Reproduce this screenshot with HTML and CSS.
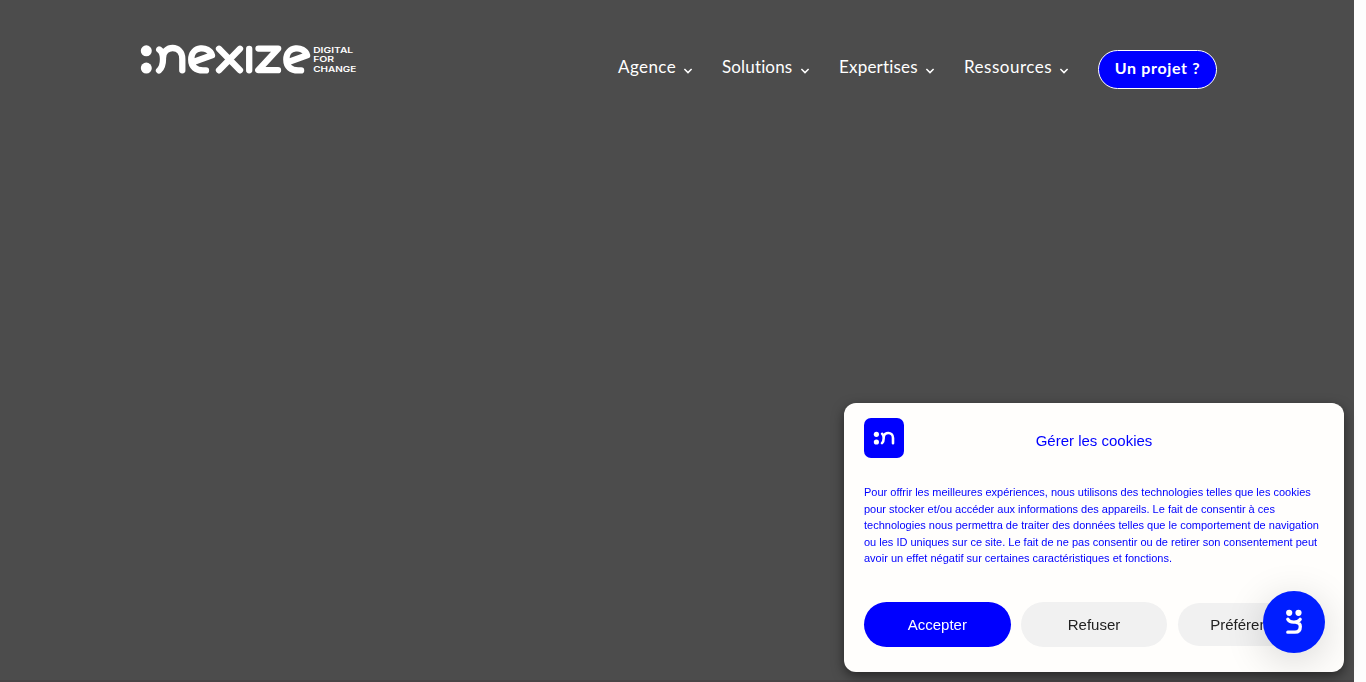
FILE: index.html
```html
<!DOCTYPE html>
<html lang="fr">
<head>
<meta charset="utf-8">
<title>Nexize</title>
<link rel="stylesheet" href="styles.css">
</head>
<body>
<div class="page">
  <header class="header">
    <a class="logo">
      <svg width="218" height="32" viewBox="140 44 218 32" fill="none" stroke="#fff" stroke-width="6.3" stroke-linecap="round" stroke-linejoin="round">
        <g fill="#fff" stroke="none"><circle cx="146.3" cy="50.8" r="5.5"/><circle cx="146.3" cy="68.1" r="5.5"/></g>
        <path d="M159.2 49.5Q163 52 163 59Q163 67 159 70.5M163 58C163 45 182.3 44 182.3 59V70.3"/>
        <path id="e" d="M194 61.8L212 55.3C209 45.3 191.2 45.5 191.2 59.5C191.2 67 196 70.4 203 70.4H206"/>
        <path d="M219 48.8L240 70.3M240 48.8L219 70.3M249.2 48.8V70.3M258.5 48.6H278.2L258.3 70.2H278"/>
        <use href="#e" x="95.1"/>
        <g class="tagline">
          <text x="313.2" y="53" textLength="40" lengthAdjust="spacingAndGlyphs">DIGITAL</text>
          <text x="313.2" y="62.3" textLength="21" lengthAdjust="spacingAndGlyphs">FOR</text>
          <text x="313.2" y="71.7" textLength="43" lengthAdjust="spacingAndGlyphs">CHANGE</text>
        </g>
      </svg>
    </a>
    <nav class="nav">
      <a class="link agence"><span>Agence</span><svg class="chevron" viewBox="0 0 8 6"><path d="M.4 1L4 4.6 7.6 1"/></svg></a>
      <a class="link solutions"><span>Solutions</span><svg class="chevron" viewBox="0 0 8 6"><path d="M.4 1L4 4.6 7.6 1"/></svg></a>
      <a class="link expertises"><span>Expertises</span><svg class="chevron" viewBox="0 0 8 6"><path d="M.4 1L4 4.6 7.6 1"/></svg></a>
      <a class="link ressources"><span>Ressources</span><svg class="chevron" viewBox="0 0 8 6"><path d="M.4 1L4 4.6 7.6 1"/></svg></a>
      <a class="project">Un projet ?</a>
    </nav>
  </header>
</div>
<section class="cookies">
  <div class="cookies-head">
    <svg class="mark" viewBox="0 0 40 40">
      <rect width="40" height="40" rx="7" fill="#00f"/>
      <circle cx="12.4" cy="16.3" r="2.6" fill="#fff"/><circle cx="12.4" cy="24" r="2.6" fill="#fff"/>
      <path d="M18.1 15.8Q19.7 17 19.7 20Q19.7 23.5 18 25.2M19.7 19.5C19.7 13.5 29 13.3 29 20V25.2" fill="none" stroke="#fff" stroke-width="2.6" stroke-linecap="round"/>
    </svg>
    <h2 class="title">Gérer les cookies</h2>
  </div>
  <p class="message">Pour offrir les meilleures expériences, nous utilisons des technologies telles que les cookies pour stocker et/ou accéder aux informations des appareils. Le fait de consentir à ces technologies nous permettra de traiter des données telles que le comportement de navigation ou les ID uniques sur ce site. Le fait de ne pas consentir ou de retirer son consentement peut avoir un effet négatif sur certaines caractéristiques et fonctions.</p>
  <div class="buttons">
    <button class="button accept">Accepter</button>
    <button class="button">Refuser</button>
    <button class="button prefs">Préférences</button>
  </div>
</section>
<div class="chat">
  <svg width="62" height="62" viewBox="0 0 62 62" fill="none" stroke="#fff" stroke-width="3.3" stroke-linecap="round" stroke-linejoin="round">
    <g fill="#fff" stroke="none"><circle cx="26.2" cy="21.8" r="3.1"/><circle cx="35.5" cy="21.8" r="3.1"/></g>
    <path d="M24.8 28.2C26.5 31.8 34.5 32.3 37.2 28.3M33 31.3Q37.3 31.8 37.3 35.5Q37.3 41.2 32 41.2H24.8"/>
  </svg>
</div>
</body>
</html>
```

FILE: styles.css
```css
* { box-sizing: border-box; }
body { margin: 0; height: 682px; overflow: hidden; background: #fdfdfd; font-family: "Liberation Sans", Arial, sans-serif; }
.page { width: 1354px; height: 682px; background: #4c4c4c; border-bottom: 2px solid #484446; }
.header { display: flex; justify-content: space-between; align-items: flex-start; padding: 44px 137px 0 140px; }
.logo { display: flex; }
.tagline { fill: #fff; stroke: none; font: 600 7.8px/1 Inter, sans-serif; }
.nav { display: flex; padding-top: 6px; color: #fff; font-family: Lato, sans-serif; font-variant-ligatures: none; }
.link { display: flex; gap: 8px; align-items: center; height: 36px; margin-right: 30px; font-size: 17px; white-space: nowrap; }
.link span { margin-top: -3px; }
.agence span { width: 58px; letter-spacing: .4px; }
.solutions span { width: 71px; letter-spacing: .15px; }
.expertises span { width: 79px; letter-spacing: .2px; }
.ressources span { width: 88px; letter-spacing: .5px; }
.chevron { width: 8px; height: 6px; margin-top: 5px; overflow: visible; fill: none; stroke: #fff; stroke-width: 1.5; }
.project { width: 119px; height: 39px; border: 1px solid #fff; border-radius: 20px; background: #00f; text-align: center; font-size: 16px; font-weight: 700; line-height: 33px; letter-spacing: .65px; }
.cookies { position: fixed; left: 844px; top: 403px; width: 500px; height: 269px; padding: 15px 20px; border-radius: 12px; background: #fffefc; box-shadow: 0 4px 12px rgba(0,0,0,.5); color: #00f; }
.cookies-head { display: grid; grid-template-columns: 40px 1fr 40px; height: 66px; }
.mark { width: 40px; height: 40px; }
.title { margin: 14px 0 0; font-size: 15px; font-weight: 400; line-height: 18px; text-align: center; }
.message { margin: 0; height: 118px; font-size: 11px; line-height: 16.5px; }
.buttons { display: grid; grid-template-columns: repeat(3, 1fr); gap: 10px; align-items: center; }
.button { height: 45px; padding: 0; border: 0; border-radius: 23px; background: #f1f1f1; color: #222; font: 15px "Liberation Sans", Arial, sans-serif; }
.accept { background: #00f; color: #fff; }
.prefs { height: 43px; margin-left: 1px; padding-right: 1px; }
.chat { position: fixed; left: 1263px; top: 591px; width: 62px; height: 62px; border-radius: 50%; background: #001eff; box-shadow: 0 8px 40px rgba(0,0,0,.16); }
```
